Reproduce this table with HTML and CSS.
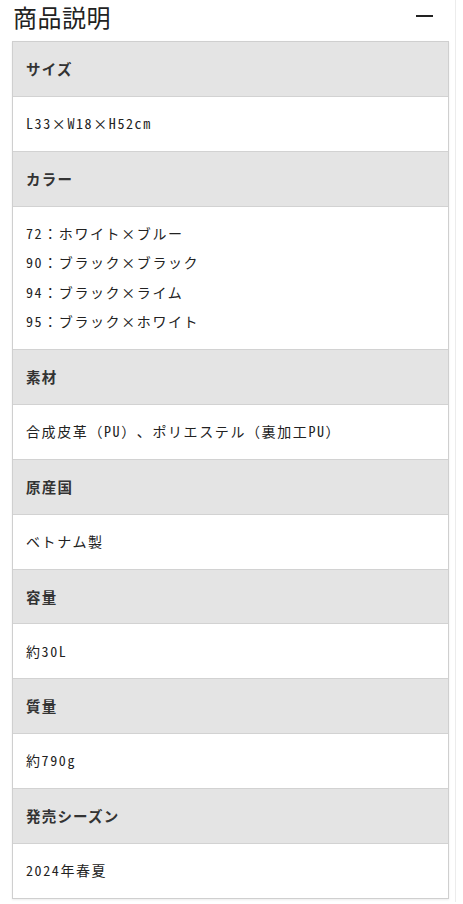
FILE: index.html
```html
<!DOCTYPE html>
<html lang="ja">
<head>
  <meta charset="UTF-8" />
  <title>商品説明</title>
  <meta name="viewport" content="width=device-width, initial-scale=1" />
  <link rel="stylesheet" href="styles.css">
</head>
<body>
  <section class="spec">
    <div class="spec-head">
      <h2>商品説明</h2>
      <span class="toggle"></span>
    </div>
    <dl class="spec-table">
      <dt>サイズ</dt>
      <dd class="hw">L33×W18×H52cm</dd>
      <dt>カラー</dt>
      <dd>
        <span class="hw">72</span>：ホワイト×ブルー<br>
        <span class="hw">90</span>：ブラック×ブラック<br>
        <span class="hw">94</span>：ブラック×ライム<br>
        <span class="hw">95</span>：ブラック×ホワイト
      </dd>
      <dt>素材</dt>
      <dd>合成皮革（<span class="hw">PU</span>）、ポリエステル（裏加工<span class="hw">PU</span>）</dd>
      <dt>原産国</dt>
      <dd>ベトナム製</dd>
      <dt>容量</dt>
      <dd class="hw">約30L</dd>
      <dt>質量</dt>
      <dd class="hw">約790g</dd>
      <dt>発売シーズン</dt>
      <dd class="hw">2024年春夏</dd>
    </dl>
  </section>
</body>
</html>
```

FILE: styles.css
```css
body {
  margin: 0;
  background: #fff;
  color: #222;
  font-family: "Noto Sans CJK JP", "Noto Sans", sans-serif;
}
.spec {
  width: 456px;
  min-height: 904px;
  box-sizing: border-box;
  border-right: 1px solid #ececec;
  padding: 0 6px 0 12px;
}
.spec-head {
  display: flex;
  justify-content: space-between;
  align-items: center;
  height: 36px;
  margin-top: -2px;
  margin-bottom: 7px;
}
.spec-head h2 {
  margin: 0 0 0 1px;
  font-size: 24px;
  font-weight: 400;
  letter-spacing: 0.5px;
  color: #222;
}
.toggle {
  width: 17px;
  height: 2px;
  background: #222;
  margin-right: 16px;
}
.spec-table {
  margin: 0;
  border: 1px solid #cfcfcf;
  box-shadow: 0 1px 2px rgba(0,0,0,0.08);
}
.spec-table dt,
.spec-table dd {
  margin: 0;
  padding: 12.2px 13px;
  line-height: 29.5px;
  font-size: 14px;
  letter-spacing: 1.2px;
  border-top: 1px solid #d2d2d2;
}
.spec-table dt:first-child {
  border-top: none;
}
.spec-table dt {
  background: #e4e4e4;
  font-weight: 700;
  font-size: 14.5px;
  color: #333;
}
.spec-table dd {
  background: #fff;
  color: #222;
  letter-spacing: 1.6px;
  text-spacing-trim: space-all;
}
/* half-width latin, like the narrow digits of a Japanese gothic */
.hw {
  font-feature-settings: "hwid";
}
```
